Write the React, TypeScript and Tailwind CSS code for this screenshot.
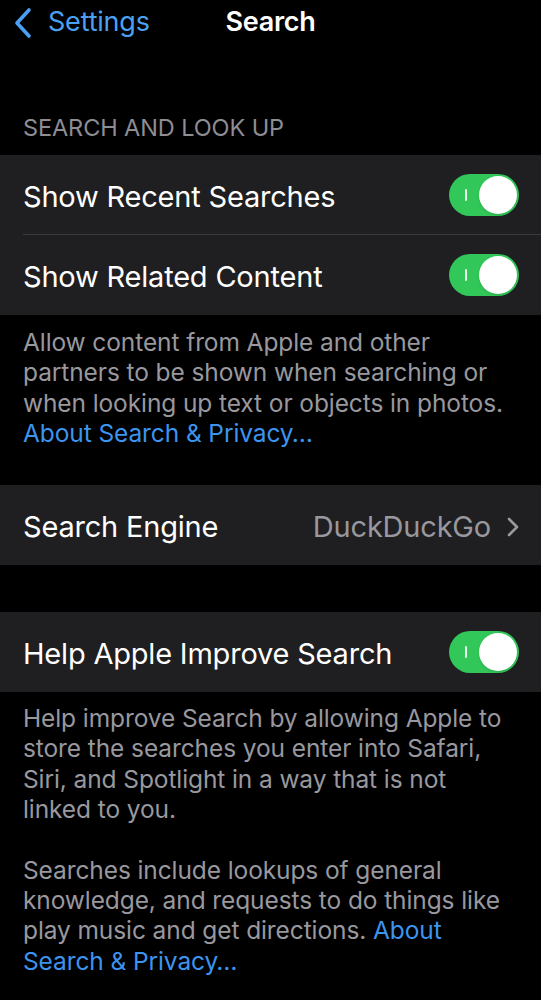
import React from "react";

function Toggle() {
  return (
    <div className="relative w-[70px] h-[42px] rounded-full bg-[#32c759] shrink-0">
      <div className="absolute left-[16px] top-[15px] w-[2px] h-[12px] bg-white/90 rounded-sm" />
      <div className="absolute right-[2px] top-[2px] w-[38px] h-[38px] rounded-full bg-white shadow" />
    </div>
  );
}

function Row({ label, children, divider }: { label: string; children?: React.ReactNode; divider?: boolean }) {
  return (
    <div className="relative h-[80px] flex items-center justify-between pl-[23px] pr-[22px]">
      <span className="text-[29px] text-white tracking-[-0.2px] pt-[4px]">{label}</span>
      {children}
      {divider && <div className="absolute bottom-0 left-[23px] right-0 h-px bg-[#3a3a3c]" />}
    </div>
  );
}

export default function App() {
  return (
    <div className="w-[541px] h-[1000px] bg-black overflow-hidden" style={{ fontFamily: "Inter, 'Noto Sans', sans-serif" }}>
      {/* Nav bar */}
      <div className="relative h-[45px] flex items-center">
        <div className="flex items-center pl-[12px] gap-[14px] text-[#4aa1f3]">
          <svg width="22" height="32" viewBox="0 0 22 32" fill="none">
            <path d="M17 3 L5 16 L17 29" stroke="currentColor" strokeWidth="3.6" strokeLinecap="round" strokeLinejoin="round" />
          </svg>
          <span className="text-[27px] tracking-[-0.2px]">Settings</span>
        </div>
        <span className="absolute left-1/2 -translate-x-1/2 text-[27px] font-semibold text-white tracking-[-0.3px]">Search</span>
      </div>

      {/* Section header */}
      <div className="pt-[68px] pb-[12px] px-[23px] text-[23.5px] text-[#8d8d93] uppercase tracking-[-0.1px] leading-[30px]">
        Search and Look Up
      </div>

      <div className="bg-[#1f1f21]">
        <Row label="Show Recent Searches" divider>
          <Toggle />
        </Row>
        <Row label="Show Related Content">
          <Toggle />
        </Row>
      </div>

      <p className="px-[23px] pt-[12px] pb-[37px] text-[24.5px] leading-[30.3px] text-[#98989e] tracking-[-0.1px] whitespace-nowrap">
        Allow content from Apple and other
        <br />
        partners to be shown when searching or
        <br />
        when looking up text or objects in photos.
        <br />
        <span className="text-[#3d94ee]">About Search &amp; Privacy…</span>
      </p>

      <div className="bg-[#1f1f21]">
        <Row label="Search Engine">
          <div className="flex items-center gap-[16px] pt-[4px]">
            <span className="text-[29px] text-[#98989e] tracking-[-0.2px]">DuckDuckGo</span>
            <svg width="12" height="20" viewBox="0 0 12 20" fill="none">
              <path d="M2 2 L10 10 L2 18" stroke="#98989e" strokeWidth="2.6" strokeLinecap="round" strokeLinejoin="round" />
            </svg>
          </div>
        </Row>
      </div>

      <div className="h-[47px]" />

      <div className="bg-[#1f1f21]">
        <Row label="Help Apple Improve Search">
          <Toggle />
        </Row>
      </div>

      <div className="px-[23px] pt-[11px] text-[24.5px] leading-[30.3px] text-[#98989e] tracking-[-0.1px] whitespace-nowrap">
        <p>
          Help improve Search by allowing Apple to
          <br />
          store the searches you enter into Safari,
          <br />
          Siri, and Spotlight in a way that is not
          <br />
          linked to you.
        </p>
        <p className="mt-[30.3px]">
          Searches include lookups of general
          <br />
          knowledge, and requests to do things like
          <br />
          play music and get directions. <span className="text-[#3d94ee]">About</span>
          <br />
          <span className="text-[#3d94ee]">Search &amp; Privacy…</span>
        </p>
      </div>
    </div>
  );
}
